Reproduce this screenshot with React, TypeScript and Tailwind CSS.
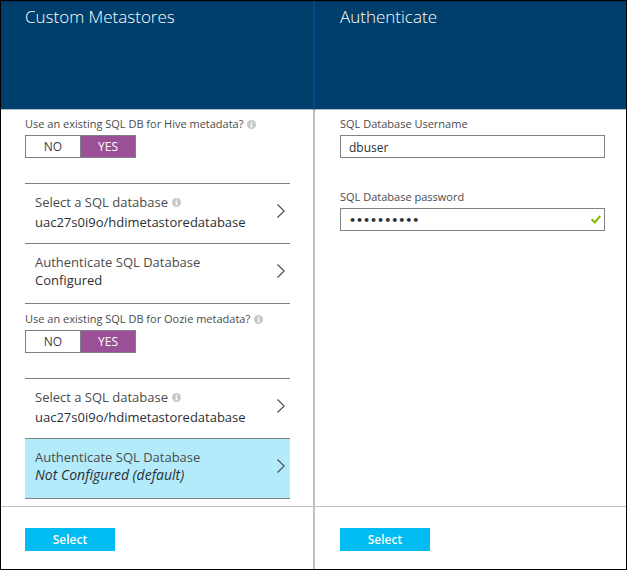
import { useState, type ReactNode } from "react";

function InfoIcon() {
  return (
    <svg viewBox="0 0 10 10" className="size-[9px] shrink-0" aria-hidden="true">
      <circle cx="5" cy="5" r="5" fill="#c8c8c8" />
      <path d="M4.3 1.8h1.5v1.3H4.3zM3.8 4h2v3.2h.6v.9H3.7v-.9h.6V4.9h-.5z" fill="#fff" />
    </svg>
  );
}

function Chevron() {
  return (
    <svg viewBox="0 0 8 14" className="h-3.5 w-2 shrink-0" fill="none" stroke="#45494f" strokeWidth="1.1" aria-hidden="true">
      <path d="M0.5 0.5 7.2 7 0.5 13.5" />
    </svg>
  );
}

function CheckMark() {
  return (
    <svg viewBox="0 0 10 9" className="absolute top-[7px] right-1 h-[9px] w-2.5" fill="none" stroke="#7fba00" strokeWidth="2" aria-hidden="true">
      <path d="M0.6 4.2 3.8 7.4 9.3 0.8" />
    </svg>
  );
}

function Toggle({ label }: { label: string }) {
  const [on, setOn] = useState(true);
  const base = "h-full flex-1 text-[12px] leading-[21px]";
  const active = "bg-[#9b4f96] text-white";
  const idle = "bg-white text-[#3c4046]";
  return (
    <div>
      <div className="flex items-center gap-1 text-[11px] leading-[18px] text-[#4b4b4b]">
        <span>{label}</span>
        <InfoIcon />
      </div>
      <div role="group" aria-label={label} className="mt-0.5 flex h-[23px] w-[111px] divide-x divide-[#7f8287] border border-[#7f8287]">
        <button type="button" aria-pressed={!on} onClick={() => setOn(false)} className={`${base} ${on ? idle : active}`}>
          NO
        </button>
        <button type="button" aria-pressed={on} onClick={() => setOn(true)} className={`${base} ${on ? active : idle}`}>
          YES
        </button>
      </div>
    </div>
  );
}

type RowProps = { title: string; value: string; info?: boolean; selected?: boolean };

function Row({ title, value, info, selected }: RowProps) {
  return (
    <li>
      <button
        type="button"
        className={`flex h-[60px] w-full items-center justify-between border-t border-[#7f8287] pr-[5px] pl-2.5 text-left ${selected ? "bg-[#b3ebfb]" : "bg-white"}`}
      >
        <span className={`flex h-full flex-col text-[13px] ${info ? "pt-2 leading-[20px]" : "pt-[9px] leading-[18px]"}`}>
          <span className="flex items-center gap-1 text-[#4b4b4b]">
            {title}
            {info && <InfoIcon />}
          </span>
          <span className={`text-[#2b2f36] ${selected ? "text-[14px] italic" : ""}`}>{value}</span>
        </span>
        <span className="flex pb-1.5">
          <Chevron />
        </span>
      </button>
    </li>
  );
}

function Rows({ children }: { children: ReactNode }) {
  return <ul className="mt-[25px] border-b border-[#7f8287]">{children}</ul>;
}

type FieldProps = { id: string; label: string; type: "text" | "password"; value: string; valid?: boolean };

function Field({ id, label, type, value, valid }: FieldProps) {
  return (
    <div>
      <label htmlFor={id} className="block text-[11px] leading-[18px] text-[#4b4b4b]">
        {label}
      </label>
      <div className="relative mt-0.5">
        <input
          id={id}
          type={type}
          defaultValue={value}
          className={`block h-[23px] w-full border border-[#7f8287] bg-white px-2 pt-0.5 text-[#2b2f36] outline-none ${type === "password" ? "font-['DejaVu_Sans',sans-serif] text-[11px] font-bold" : "text-[12px]"}`}
        />
        {valid && <CheckMark />}
      </div>
    </div>
  );
}

function Blade({ title, last, children }: { title: string; last?: boolean; children: ReactNode }) {
  const inset = last ? "pl-[25px] pr-[21px]" : "pl-6 pr-[23px]";
  return (
    <section className={`flex min-w-0 flex-col bg-white ${last ? "" : "border-r-2 border-[#c0c0c0]"}`}>
      <header
        className={`h-[109px] border-b border-[#b4bcc6] bg-[#003e6c] bg-linear-to-b from-[#003660] to-[#003e6c] to-[4px] pt-1 text-white ${inset} ${last ? "" : "-mr-0.5 border-r-2 border-r-[#00498a]"}`}
      >
        <h2 className="text-[17px] leading-6 font-light">{title}</h2>
      </header>
      <div className={`flex-1 pt-[5px] ${inset}`}>{children}</div>
      <footer className={`mt-[7px] h-[63px] border-t border-[#c0c0c0] pt-[21px] ${inset}`}>
        <button type="button" className="block h-[23px] w-[90px] bg-[#00bcf2] text-[12px] font-semibold text-white">
          Select
        </button>
      </footer>
    </section>
  );
}

export default function App() {
  return (
    <main className="grid min-h-screen grid-cols-[314fr_311fr] border border-black font-['Open_Sans','Noto_Sans',sans-serif]">
      <Blade title="Custom Metastores">
        <Toggle label="Use an existing SQL DB for Hive metadata?" />
        <Rows>
          <Row title="Select a SQL database" value="uac27s0i9o/hdimetastoredatabase" info />
          <Row title="Authenticate SQL Database" value="Configured" />
        </Rows>
        <div className="pt-1.5">
          <Toggle label="Use an existing SQL DB for Oozie metadata?" />
        </div>
        <Rows>
          <Row title="Select a SQL database" value="uac27s0i9o/hdimetastoredatabase" info />
          <Row title="Authenticate SQL Database" value="Not Configured (default)" selected />
        </Rows>
      </Blade>
      <Blade title="Authenticate" last>
        <div className="flex flex-col gap-[30px]">
          <Field id="username" label="SQL Database Username" type="text" value="dbuser" />
          <Field id="password" label="SQL Database password" type="password" value="metastore1" valid />
        </div>
      </Blade>
    </main>
  );
}
